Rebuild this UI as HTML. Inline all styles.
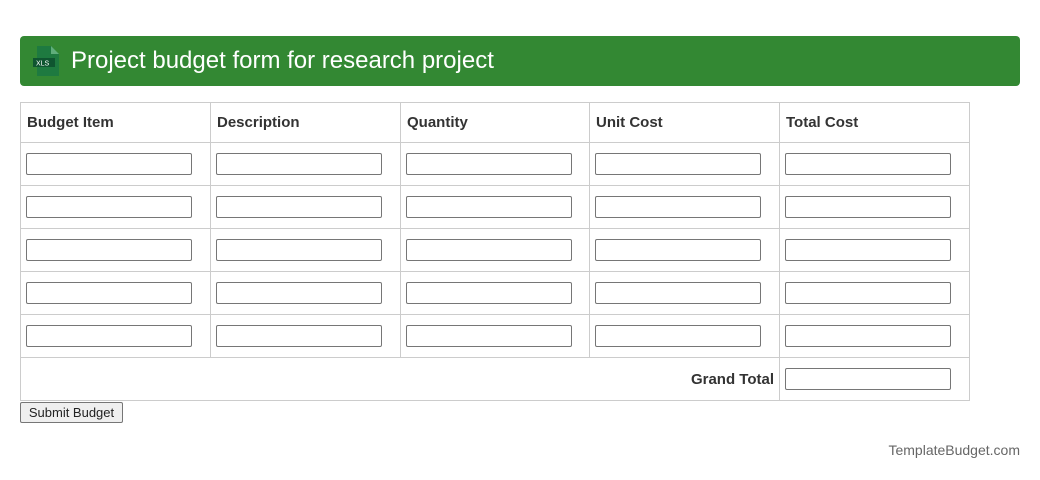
<!DOCTYPE html>
<html><head><meta charset="utf-8"><style>
body{margin:0;background:#fff;font-family:"Liberation Sans",Arial,sans-serif;width:1040px;height:480px;position:relative;overflow:hidden}
.hdr{position:absolute;left:20px;top:36px;width:1000px;height:50px;background:#338833;border-radius:4px}
.hdr .t{position:absolute;left:51px;top:10px;font-size:24px;color:#fff;line-height:30px}
.c{position:absolute;border-left:1px solid #ccc;border-top:1px solid #ccc;box-sizing:border-box}
.h{font-weight:bold;font-size:15px;color:#333;padding:11px 0 0 6px}
.in{position:absolute;width:166px;height:22px;box-sizing:border-box;border:1px solid #767676;border-radius:2px;background:#fff}
.btn{position:absolute;left:20px;top:402px;width:103px;height:21px;box-sizing:border-box;border:1px solid #767676;border-radius:2px;background:#efefef;font-size:13px;color:#222;text-align:center;line-height:19px}
.ft{position:absolute;right:20px;top:442px;font-size:14px;color:#666}
</style></head><body>
<div class="hdr">
<svg style="position:absolute;left:13px;top:10px" width="28" height="30" viewBox="0 0 28 30"><path d="M4 0h14l8 8v22H4z" fill="#1e7a40"/><path d="M18 0v8h8z" fill="#5fae7b"/><rect x="0" y="12" width="22" height="9" fill="#0f5530"/><text x="3" y="19.5" font-size="7" fill="#fff" font-family="Liberation Sans">XLS</text></svg>
<div class="t">Project budget form for research project</div>
</div>
<div id="tb"></div>
<div class="btn">Submit Budget</div>
<div class="ft">TemplateBudget.com</div>
<script>
var xs=[20,210,400,589,779,969],ys=[102,142,185,228,271,314,357,400],h=["Budget Item","Description","Quantity","Unit Cost","Total Cost"],o="";
for(var r=0;r<7;r++)for(var c=0;c<5;c++){var x=xs[c],y=ys[r],w=xs[c+1]-x+1,hh=ys[r+1]-y+1;
if(r==6){if(c<4){if(c==0)o+='<div class="c" style="left:20px;top:'+y+'px;width:760px;height:'+hh+'px;border-bottom:1px solid #ccc;text-align:right;font-weight:bold;font-size:15px;color:#333;padding:13px 6px 0 0">Grand Total</div>';continue;}}
o+='<div class="c" style="left:'+x+'px;top:'+y+'px;width:'+w+'px;height:'+hh+'px;border-right:1px solid #ccc;'+(r==6?'border-bottom:1px solid #ccc;':'')+'">'+(r==0?'<div class="h">'+h[c]+'</div>':'<div class="in" style="left:5px;top:10px"></div>')+'</div>';}
document.getElementById("tb").innerHTML=o;
</script>
</body></html>
